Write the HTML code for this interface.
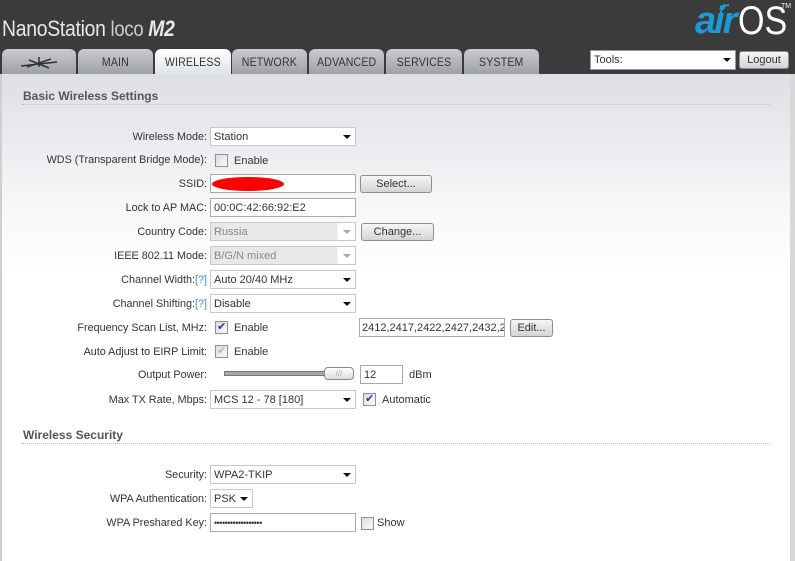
<!DOCTYPE html>
<html><head><meta charset="utf-8">
<style>
*{box-sizing:border-box;margin:0;padding:0}
body{width:795px;height:561px;overflow:hidden;background:#3b3b3b;font-family:"Liberation Sans",sans-serif;font-size:11px;color:#333;position:relative}
.abs{position:absolute}
.title{left:2px;top:16px;color:#e8e8e8;font-size:22px;letter-spacing:-0.3px;transform:scaleX(0.88);transform-origin:left;white-space:nowrap}
.tab{position:absolute;top:49px;height:25px;border-radius:6px 6px 0 0;background:linear-gradient(#c9cbce,#9ea1a6);color:#333;font-size:12px;text-align:center;line-height:26px;letter-spacing:0.2px}
.tab span{display:inline-block;transform:scaleX(0.88)}
.tab.act{background:linear-gradient(#ffffff,#dfe1e5);height:26px}
.panel{left:0;top:74px;width:790px;height:487px;background:linear-gradient(#dcdfe4 0,#f6f7f8 130px,#fff 200px);border-left:2px solid #cfcfcf}
.rstrip{left:790px;top:74px;width:5px;height:487px;background:#d8d8d8}
.sec{left:23px;font-size:12px;font-weight:bold;color:#555}
.dots{left:22px;width:748px;height:0;border-top:1px dotted #bbb}
.lbl{position:absolute;right:588px;text-align:right;white-space:nowrap;height:14px;line-height:14px;font-size:10.8px}
.lbl a{color:#3d8fd0;text-decoration:none}
.inp{position:absolute;height:19px;border:1px solid #a9a9a9;background:#fff;padding-left:3px;padding-top:1px;line-height:17px;white-space:nowrap;overflow:hidden}
.sel{position:absolute;height:19px;border:1px solid #c8c8c8;background:#fff;padding-left:3px;padding-top:1px;line-height:17px;white-space:nowrap}
.sel:after{content:"";position:absolute;right:4px;top:7px;border-left:4px solid transparent;border-right:4px solid transparent;border-top:4px solid #111}
.sel.dis{background:linear-gradient(90deg,#e8e8e8 0,#e8e8e8 88%,#fff 88%);color:#888}
.sel.dis:after{border-top-color:#aaa}
.btn{position:absolute;height:18px;border:1px solid #8e8e8e;border-radius:3px;background:linear-gradient(#f6f6f6,#d4d4d4);text-align:center;line-height:16px}
.cb{position:absolute;width:13px;height:13px;border:1px solid #8e8f8f;background:linear-gradient(135deg,#dcdcdc,#fafafa)}
.cb.on:after{content:"✔";position:absolute;left:1px;top:-2px;font-size:11px;color:#2a3f8e}
.cb.dis:after{color:#b8b8b8}
.t{position:absolute;white-space:nowrap;line-height:14px}
</style></head><body>
<div class="abs title">NanoStation<span style="font-weight:100;color:#ccc;font-size:21px"> loco </span><b style="font-style:italic;font-weight:900">M2</b></div>
<div class="abs" style="left:695px;top:2px;font-size:38px;font-style:italic;font-weight:bold;color:#1b9ad6;letter-spacing:-2px;line-height:38px">air</div>
<div class="abs" style="left:738px;top:1px;font-size:40px;color:#fff;line-height:40px;transform:scaleX(0.85);transform-origin:left">OS</div>
<div class="abs" style="left:781px;top:3px;font-size:7px;color:#eee">TM</div>
<svg class="abs" style="left:718px;top:0" width="20" height="16"><path d="M3 13 A8 8 0 0 1 11 5 M3 9 A4 4 0 0 1 7 5" stroke="#1b9ad6" stroke-width="2" fill="none"/></svg>

<div class="tab" style="left:2px;width:74px"><svg width="40" height="14" style="margin-top:6px"><path d="M2 11 L38 7 M20 2 L20 12 M10 5 L30 13 M8 12 L32 4" stroke="#333" stroke-width="1.5"/></svg></div>
<div class="tab" style="left:78px;width:75px"><span>MAIN</span></div>
<div class="tab act" style="left:155px;width:76px"><span>WIRELESS</span></div>
<div class="tab" style="left:232px;width:75px"><span>NETWORK</span></div>
<div class="tab" style="left:309px;width:75px"><span>ADVANCED</span></div>
<div class="tab" style="left:386px;width:76px"><span>SERVICES</span></div>
<div class="tab" style="left:464px;width:75px"><span>SYSTEM</span></div>
<div class="sel" style="left:590px;top:50px;width:146px;height:20px;border-color:#999">Tools:</div>
<div class="btn" style="left:739px;top:51px;width:50px;color:#333">Logout</div>

<div class="abs panel"></div>
<div class="abs rstrip"></div>

<div class="abs sec" style="top:89px">Basic Wireless Settings</div>
<div class="abs dots" style="top:104px"></div>

<div class="lbl" style="top:130px">Wireless Mode:</div>
<div class="sel" style="left:210px;top:127px;width:146px">Station</div>
<div class="lbl" style="top:153px">WDS (Transparent Bridge Mode):</div>
<div class="cb" style="left:215px;top:154px"></div><div class="t" style="left:234px;top:154px">Enable</div>
<div class="lbl" style="top:177px">SSID:</div>
<div class="inp" style="left:210px;top:174px;width:146px"></div>
<div class="abs" style="left:212px;top:177px;width:72px;height:14px;background:#f00;border-radius:50%"></div>
<div class="btn" style="left:360px;top:175px;width:72px">Select...</div>
<div class="lbl" style="top:201px">Lock to AP MAC:</div>
<div class="inp" style="left:210px;top:198px;width:146px">00:0C:42:66:92:E2</div>
<div class="lbl" style="top:225px">Country Code:</div>
<div class="sel dis" style="left:210px;top:222px;width:146px">Russia</div>
<div class="btn" style="left:361px;top:223px;width:73px">Change...</div>
<div class="lbl" style="top:249px">IEEE 802.11 Mode:</div>
<div class="sel dis" style="left:210px;top:246px;width:146px">B/G/N mixed</div>
<div class="lbl" style="top:273px">Channel Width:<a>[?]</a></div>
<div class="sel" style="left:210px;top:270px;width:146px">Auto 20/40 MHz</div>
<div class="lbl" style="top:297px">Channel Shifting:<a>[?]</a></div>
<div class="sel" style="left:210px;top:294px;width:146px">Disable</div>
<div class="lbl" style="top:321px">Frequency Scan List, MHz:</div>
<div class="cb on" style="left:215px;top:321px"></div><div class="t" style="left:234px;top:321px">Enable</div>
<div class="inp" style="left:359px;top:318px;width:146px;padding-left:2px">2412,2417,2422,2427,2432,2</div>
<div class="btn" style="left:510px;top:319px;width:43px">Edit...</div>
<div class="lbl" style="top:345px">Auto Adjust to EIRP Limit:</div>
<div class="cb on dis" style="left:215px;top:345px"></div><div class="t" style="left:234px;top:345px">Enable</div>
<div class="lbl" style="top:368px">Output Power:</div>
<div class="abs" style="left:224px;top:371px;width:105px;height:5px;background:#a8a8a8;border:1px solid #777"></div>
<div class="abs" style="left:324px;top:367px;width:30px;height:13px;border:1px solid #888;border-radius:4px;background:linear-gradient(#fff,#ddd);font-size:8px;color:#aaa;text-align:center;line-height:11px">///</div>
<div class="inp" style="left:360px;top:365px;width:43px">12</div>
<div class="t" style="left:409px;top:368px">dBm</div>
<div class="lbl" style="top:393px">Max TX Rate, Mbps:</div>
<div class="sel" style="left:210px;top:390px;width:146px">MCS 12 - 78 [180]</div>
<div class="cb on" style="left:363px;top:393px"></div><div class="t" style="left:382px;top:393px">Automatic</div>

<div class="abs sec" style="top:428px">Wireless Security</div>
<div class="abs dots" style="top:443px"></div>
<div class="lbl" style="top:468px">Security:</div>
<div class="sel" style="left:210px;top:465px;width:146px">WPA2-TKIP</div>
<div class="lbl" style="top:492px">WPA Authentication:</div>
<div class="sel" style="left:210px;top:489px;width:43px">PSK</div>
<div class="lbl" style="top:516px">WPA Preshared Key:</div>
<div class="inp" style="left:210px;top:513px;width:146px;font-size:9px;letter-spacing:-0.5px">••••••••••••••••••</div>
<div class="cb" style="left:361px;top:517px"></div><div class="t" style="left:377px;top:516px">Show</div>
</body></html>
